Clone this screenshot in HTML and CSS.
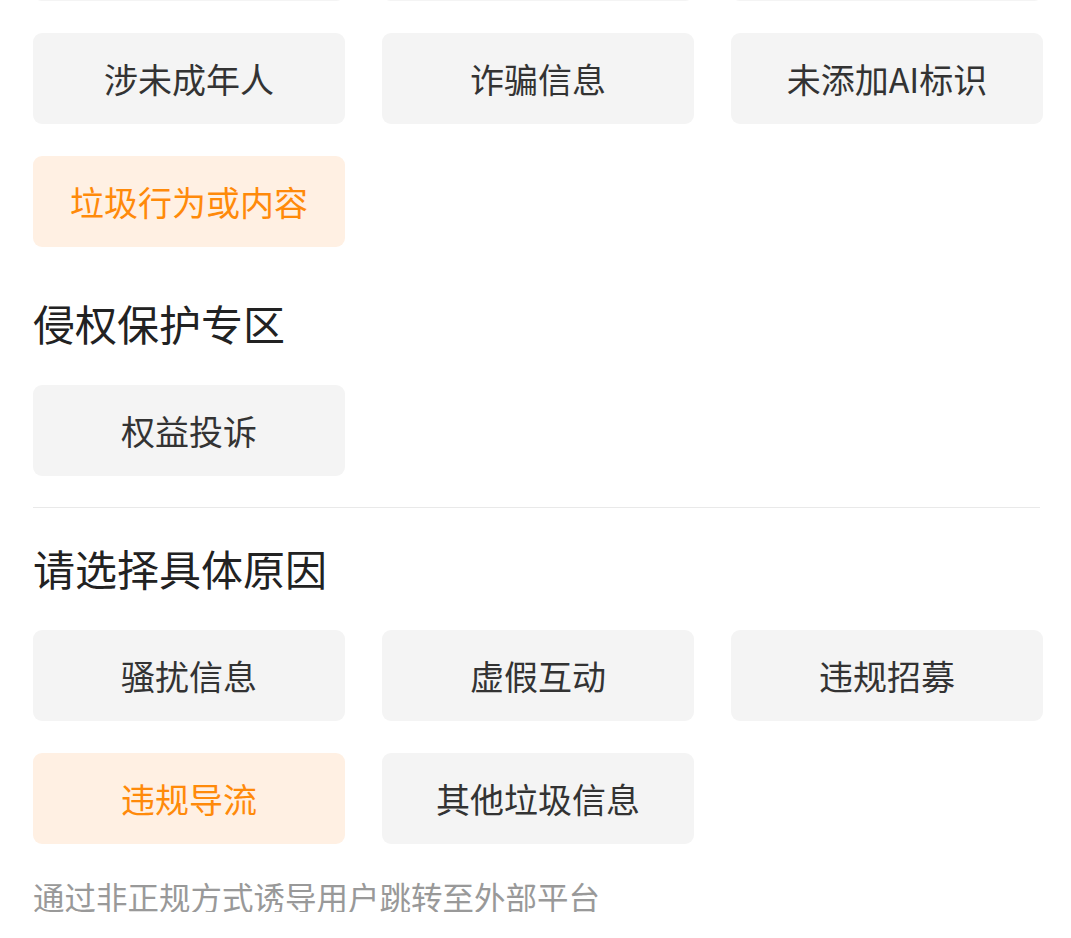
FILE: index.html
```html
<!DOCTYPE html>
<html lang="zh-CN">

<head>
    <meta charset="UTF-8">
    <meta name="viewport" content="width=device-width, initial-scale=1.0">
    <title>举报</title>
    <link rel="stylesheet" href="styles.css">
</head>

<body>
    <div class="page">
        <ul class="options first">
            <!-- 上一排已滚出屏幕，只剩底边 -->
            <li class="opt"></li>
            <li class="opt"></li>
            <li class="opt"></li>
            <li class="opt">涉未成年人</li>
            <li class="opt">诈骗信息</li>
            <li class="opt">未添加AI标识</li>
            <li class="opt active">垃圾行为或内容</li>
        </ul>

        <h2 class="title">侵权保护专区</h2>
        <ul class="options">
            <li class="opt">权益投诉</li>
        </ul>

        <div class="line"></div>

        <h2 class="title second">请选择具体原因</h2>
        <ul class="options">
            <li class="opt">骚扰信息</li>
            <li class="opt">虚假互动</li>
            <li class="opt">违规招募</li>
            <li class="opt active">违规导流</li>
            <li class="opt">其他垃圾信息</li>
        </ul>
        <p class="tip">通过非正规方式诱导用户跳转至外部平台</p>
    </div>
</body>

</html>
```

FILE: styles.css
```css
* {
    padding: 0;
    margin: 0;
    box-sizing: border-box;
}

body {
    background: #fff;
    font-family: "Noto Sans CJK SC", "Noto Sans", sans-serif;
    color: #333;
}

.page {
    padding: 0 28px 0 33px;
}

.options {
    list-style: none;
    display: grid;
    grid-template-columns: repeat(3, 312px);
    column-gap: 37px;
    row-gap: 32px;
}

/* 页面已滚动，第一排只露出底边 */
.options.first {
    margin-top: -90px;
}

.opt {
    height: 91px;
    border-radius: 9px;
    background-color: #f4f4f4;
    display: flex;
    align-items: center;
    justify-content: center;
    font-size: 34px;
    color: #333;
    cursor: pointer;
}

.opt.active {
    background-color: #fff0e3;
    color: #ff8a0a;
}

.title {
    font-size: 42px;
    font-weight: normal;
    line-height: 42px;
    color: #222;
    margin: 55px 0 41px;
}

.title.second {
    margin-top: 39px;
}

.line {
    height: 1px;
    margin: 31px 3px 0 0;
    background-color: #e9e9e9;
}

.tip {
    font-size: 31.5px;
    line-height: 32px;
    color: #999;
    margin-top: 36px;
}
```
